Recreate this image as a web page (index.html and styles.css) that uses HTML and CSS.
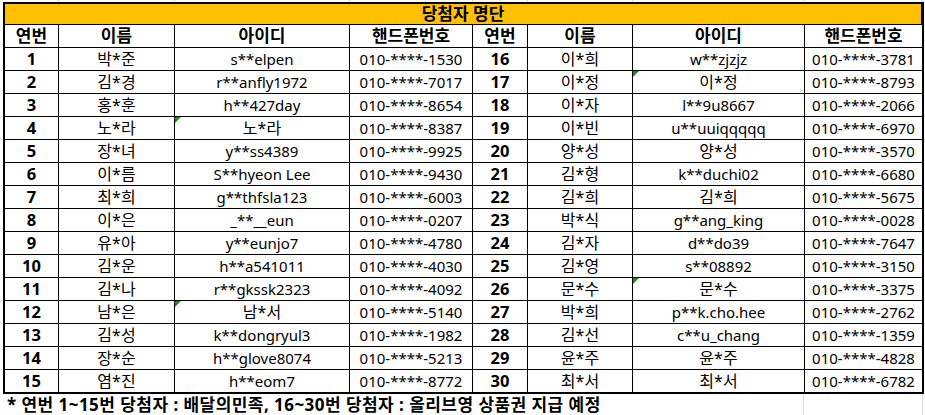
FILE: index.html
```html
<!DOCTYPE html>
<html lang="ko">
<head>
<meta charset="utf-8">
<title>당첨자 명단</title>
<link rel="stylesheet" href="styles.css">
</head>
<body>
<div class="sheet">
  <div class="topgrid">
    <span class="g c1"></span><span class="g c2"></span><span class="g c3"></span><span class="g c4"></span><span class="g c5"></span><span class="g c6"></span><span class="g c7"></span><span class="g c8"></span>
  </div>
  <table class="winners">
    <colgroup>
      <col class="w1"><col class="w2"><col class="w3"><col class="w4"><col class="w5"><col class="w6"><col class="w7"><col class="w8">
    </colgroup>
    <thead>
      <tr class="title-row"><th colspan="8" class="title">당첨자 명단</th></tr>
      <tr class="head-row">
        <th>연번</th><th>이름</th><th>아이디</th><th>핸드폰번호</th>
        <th>연번</th><th>이름</th><th>아이디</th><th class="last">핸드폰번호</th>
      </tr>
    </thead>
    <tbody>
      <tr><td class="no">1</td><td class="ko">박*준</td><td>s**elpen</td><td>010-****-1530</td><td class="no">16</td><td class="ko">이*희</td><td>w**zjzjz</td><td class="last">010-****-3781</td></tr>
      <tr><td class="no">2</td><td class="ko">김*경</td><td>r**anfly1972</td><td>010-****-7017</td><td class="no">17</td><td class="ko">이*정</td><td class="ko flag">이*정</td><td class="last">010-****-8793</td></tr>
      <tr><td class="no">3</td><td class="ko">홍*훈</td><td>h**427day</td><td>010-****-8654</td><td class="no">18</td><td class="ko">이*자</td><td>l**9u8667</td><td class="last">010-****-2066</td></tr>
      <tr><td class="no">4</td><td class="ko">노*라</td><td class="ko flag">노*라</td><td>010-****-8387</td><td class="no">19</td><td class="ko">이*빈</td><td>u**uuiqqqqq</td><td class="last">010-****-6970</td></tr>
      <tr><td class="no">5</td><td class="ko">장*녀</td><td>y**ss4389</td><td>010-****-9925</td><td class="no">20</td><td class="ko">양*성</td><td class="ko">양*성</td><td class="last">010-****-3570</td></tr>
      <tr><td class="no">6</td><td class="ko">이*름</td><td>S**hyeon Lee</td><td>010-****-9430</td><td class="no">21</td><td class="ko">김*형</td><td>k**duchi02</td><td class="last">010-****-6680</td></tr>
      <tr><td class="no">7</td><td class="ko">최*희</td><td>g**thfsla123</td><td>010-****-6003</td><td class="no">22</td><td class="ko">김*희</td><td class="ko">김*희</td><td class="last">010-****-5675</td></tr>
      <tr><td class="no">8</td><td class="ko">이*은</td><td>_**__eun</td><td>010-****-0207</td><td class="no">23</td><td class="ko">박*식</td><td>g**ang_king</td><td class="last">010-****-0028</td></tr>
      <tr><td class="no">9</td><td class="ko">유*아</td><td>y**eunjo7</td><td>010-****-4780</td><td class="no">24</td><td class="ko">김*자</td><td>d**do39</td><td class="last">010-****-7647</td></tr>
      <tr><td class="no">10</td><td class="ko">김*운</td><td>h**a541011</td><td>010-****-4030</td><td class="no">25</td><td class="ko">김*영</td><td>s**08892</td><td class="last">010-****-3150</td></tr>
      <tr><td class="no">11</td><td class="ko">김*나</td><td>r**gkssk2323</td><td>010-****-4092</td><td class="no">26</td><td class="ko">문*수</td><td class="ko flag">문*수</td><td class="last">010-****-3375</td></tr>
      <tr><td class="no">12</td><td class="ko">남*은</td><td class="ko flag">남*서</td><td>010-****-5140</td><td class="no">27</td><td class="ko">박*희</td><td>p**k.cho.hee</td><td class="last">010-****-2762</td></tr>
      <tr><td class="no">13</td><td class="ko">김*성</td><td>k**dongryul3</td><td>010-****-1982</td><td class="no">28</td><td class="ko">김*선</td><td>c**u_chang</td><td class="last">010-****-1359</td></tr>
      <tr><td class="no">14</td><td class="ko">장*순</td><td>h**glove8074</td><td>010-****-5213</td><td class="no">29</td><td class="ko">윤*주</td><td class="ko">윤*주</td><td class="last">010-****-4828</td></tr>
      <tr class="end"><td class="no">15</td><td class="ko">염*진</td><td>h**eom7</td><td>010-****-8772</td><td class="no">30</td><td class="ko">최*서</td><td class="ko">최*서</td><td class="last">010-****-6782</td></tr>
    </tbody>
  </table>
  <div class="note">
    <p class="note-text">* 연번 1~15번 당첨자 : 배달의민족, 16~30번 당첨자 : 올리브영 상품권 지급 예정</p>
    <span class="note-cell"></span>
  </div>
</div>
</body>
</html>
```
FILE: styles.css
```css
* { box-sizing: border-box; }
html, body {
  margin: 0;
  padding: 0;
  background: #ffffff;
}
body {
  font-family: "Noto Sans", "Noto Sans CJK KR", sans-serif;
  font-size: 15px;
  color: #000;
}
.sheet {
  width: 925px;
  height: 415px;
  overflow: hidden;
  padding-left: 3px;
}
.topgrid {
  display: flex;
  height: 2px;
  padding-left: 2px;
}
.g { border-right: 1px solid #dcdcdc; height: 2px; }
.c1 { width: 54px; } .c2 { width: 116px; } .c3 { width: 175px; } .c4 { width: 123px; }
.c5 { width: 55px; } .c6 { width: 105px; } .c7 { width: 172px; } .c8 { width: 117px; }

.winners {
  border-collapse: separate;
  border-spacing: 0;
  table-layout: fixed;
  width: 921px;
  border: 2px solid #000;
}
.w1 { width: 54px; } .w2 { width: 116px; } .w3 { width: 175px; } .w4 { width: 123px; }
.w5 { width: 55px; } .w6 { width: 105px; } .w7 { width: 172px; } .w8 { width: 117px; }

.winners th, .winners td {
  padding: 0;
  text-align: center;
  white-space: nowrap;
  border-right: 1px solid #000;
  border-bottom: 1px solid #000;
  line-height: 20px;
  overflow: visible;
}
.winners .last { border-right: none; }
.title-row { height: 21px; }
.title {
  background: #ffc000;
  font-weight: 700;
  font-size: 17px;
  border-right: none;
}
.head-row { height: 23px; }
.head-row th { font-weight: 700; font-size: 17px; }
.winners tbody tr { height: 23px; }
.winners tbody tr.end td { border-bottom: none; }
.winners tbody tr.end { height: 22px; }
.winners .ko { font-size: 16px; }
.winners .no { font-weight: 700; font-size: 16.5px; }
.flag { position: relative; }
.flag::before {
  content: "";
  position: absolute;
  left: 0;
  top: 0;
  width: 0;
  height: 0;
  border-top: 6px solid #1e8a1e;
  border-right: 6px solid transparent;
}
.note {
  display: flex;
  height: 22px;
}
.note-text {
  margin: 0;
  width: 801px;
  padding-left: 4px;
  font-weight: 700;
  font-size: 17px;
  letter-spacing: 0.45px;
  line-height: 22px;
  white-space: nowrap;
  border-right: 1px solid #dcdcdc;
}
.note-cell {
  width: 119px;
  border-right: 1px solid #dcdcdc;
}
```
